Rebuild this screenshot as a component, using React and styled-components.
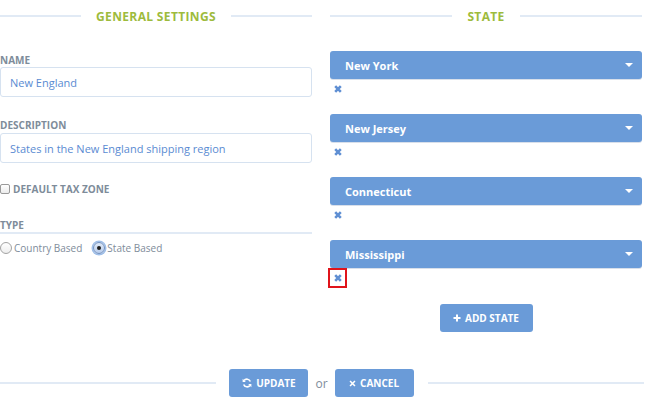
import React from "react";
import styled, { createGlobalStyle } from "styled-components";

const Global = createGlobalStyle`
  html, body { margin: 0; padding: 0; background: #fff; }
  body { font-family: "Open Sans", "Liberation Sans", sans-serif; }
  * { box-sizing: border-box; }
`;

const BLUE = "#6a9bd8";
const GREEN = "#9dbb3c";
const LABEL = "#7e8c9a";
const LINE = "#e1eaf5";

const Page = styled.div`
  width: 644px;
  display: flex;
  flex-direction: column;
`;

const Columns = styled.div`
  display: grid;
  grid-template-columns: 312px 312px;
  column-gap: 18px;
`;

const Column = styled.div`
  display: flex;
  flex-direction: column;
`;

const SectionHeader = styled.div`
  height: 32px;
  display: flex;
  align-items: center;
  gap: 15px;
  color: ${GREEN};
  font-size: 12px;
  font-weight: 700;
  letter-spacing: 0.35px;
  text-transform: uppercase;
`;

const Rule = styled.span`
  flex: 1;
  height: 2px;
  background: ${LINE};
`;

const Label = styled.div`
  font-size: 10px;
  font-weight: 700;
  line-height: 14px;
  color: ${LABEL};
  text-transform: uppercase;
  margin-top: ${(p) => p.$top}px;
  ${(p) => p.$underline && `border-bottom: 2px solid ${LINE};`}
`;

const Input = styled.input`
  display: block;
  width: 100%;
  height: 30px;
  margin-top: ${(p) => p.$top || 0}px;
  border: 1px solid #d6e2f0;
  border-radius: 3px;
  padding: 0 9px;
  font-family: inherit;
  font-size: 11px;
  color: #5a8bd2;
  outline: none;
  background: #fff;
`;

const CheckRow = styled.label`
  display: flex;
  align-items: center;
  gap: 3px;
  height: 14px;
  margin-top: 19px;
  font-size: 10px;
  font-weight: 700;
  color: ${LABEL};
`;

const CheckBox = styled.span`
  width: 10px;
  height: 10px;
  border: 1px solid #9a9a9a;
  border-radius: 2px;
  background: linear-gradient(#fff, #ececec);
`;

const RadioRow = styled.div`
  display: flex;
  align-items: center;
  gap: 11px;
  height: 14px;
  margin-top: 7px;
`;

const RadioOption = styled.label`
  display: flex;
  align-items: center;
  gap: 2px;
  font-size: 10px;
  color: ${LABEL};
`;

const RadioCircle = styled.span`
  width: 12px;
  height: 12px;
  border-radius: 50%;
  border: 1px solid ${(p) => (p.$on ? "#6f8fbf" : "#a3a3a3")};
  background: ${(p) => (p.$on ? "linear-gradient(#dfe9f7, #b9cdec)" : "linear-gradient(#fff, #eee)")};
  box-shadow: ${(p) => (p.$on ? "0 0 0 1.5px #9fbfe9" : "none")};
  display: flex;
  align-items: center;
  justify-content: center;
  &::after {
    content: "";
    width: 4px;
    height: 4px;
    border-radius: 50%;
    background: ${(p) => (p.$on ? "#1d1d1d" : "transparent")};
  }
`;

const StateList = styled.div`
  display: flex;
  flex-direction: column;
  gap: 17px;
  margin-top: 19px;
`;

const StateGroup = styled.div`
  display: flex;
  flex-direction: column;
  align-items: flex-start;
`;

const SelectBar = styled.div`
  width: 100%;
  height: 28px;
  border-radius: 3px;
  background: ${BLUE};
  box-shadow: 0 1px 0 rgba(40, 80, 140, 0.18);
  display: flex;
  align-items: center;
  justify-content: space-between;
  padding: 0 9px 0 15px;
  color: #fff;
  font-size: 11px;
  font-weight: 700;
`;

const Caret = styled.span`
  width: 0;
  height: 0;
  border-left: 4px solid transparent;
  border-right: 4px solid transparent;
  border-top: 4px solid #fff;
`;

const RemoveBtn = styled.button`
  width: 15px;
  height: 16px;
  margin-top: 2px;
  padding: 0;
  border: none;
  background: transparent;
  display: flex;
  align-items: center;
  justify-content: center;
  color: #5f8fd3;
  outline: ${(p) => (p.$marked ? "2px solid #e0141b" : "none")};
`;

const AddWrap = styled.div`
  display: flex;
  justify-content: center;
  margin-top: 18px;
`;

const Button = styled.button`
  height: 28px;
  width: ${(p) => p.$w}px;
  border: none;
  border-radius: 3px;
  background: ${BLUE};
  color: #fff;
  font-family: inherit;
  font-size: 10px;
  font-weight: 700;
  text-transform: uppercase;
  display: flex;
  align-items: center;
  justify-content: center;
  gap: 4px;
  padding: 0;
`;

const Footer = styled.div`
  display: flex;
  align-items: center;
  gap: 14px;
  margin-top: 37px;
`;

const FooterButtons = styled.div`
  display: flex;
  align-items: center;
  gap: 7px;
  margin-left: -1px;
`;

const Or = styled.span`
  font-size: 12px;
  color: ${LABEL};
`;

const XIcon = ({ size = 8, w = 2.6 }) => (
  <svg width={size} height={size} viewBox="0 0 8 8">
    <path d="M1.2 1.2L6.8 6.8M6.8 1.2L1.2 6.8" stroke="currentColor" strokeWidth={w} />
  </svg>
);

const PlusIcon = () => (
  <svg width="8" height="8" viewBox="0 0 8 8">
    <path d="M4 0.5V7.5M0.5 4H7.5" stroke="#fff" strokeWidth="2" />
  </svg>
);

const RefreshIcon = () => (
  <svg width="10" height="10" viewBox="0 0 10 10" fill="none">
    <path d="M8.3 3.6A3.6 3.6 0 0 0 2 2.6" stroke="#fff" strokeWidth="1.6" />
    <path d="M1.7 6.4A3.6 3.6 0 0 0 8 7.4" stroke="#fff" strokeWidth="1.6" />
    <path d="M0.6 0.8V4H3.8Z" fill="#fff" />
    <path d="M9.4 9.2V6H6.2Z" fill="#fff" />
  </svg>
);

const states = ["New York", "New Jersey", "Connecticut", "Mississippi"];

export default function App() {
  return (
    <Page>
      <Global />
      <Columns>
        <Column>
          <SectionHeader>
            <Rule />
            General Settings
            <Rule />
          </SectionHeader>
          <Label $top={21}>Name</Label>
          <Input defaultValue="New England" />
          <Label $top={21}>Description</Label>
          <Input $top={1} defaultValue="States in the New England shipping region" />
          <CheckRow>
            <CheckBox />
            DEFAULT TAX ZONE
          </CheckRow>
          <Label $top={22} $underline>Type</Label>
          <RadioRow>
            <RadioOption>
              <RadioCircle />
              Country Based
            </RadioOption>
            <RadioOption>
              <RadioCircle $on />
              State Based
            </RadioOption>
          </RadioRow>
        </Column>
        <Column>
          <SectionHeader>
            <Rule />
            State
            <Rule />
          </SectionHeader>
          <StateList>
            {states.map((s, i) => (
              <StateGroup key={s}>
                <SelectBar>
                  {s}
                  <Caret />
                </SelectBar>
                <RemoveBtn $marked={i === states.length - 1}>
                  <XIcon />
                </RemoveBtn>
              </StateGroup>
            ))}
          </StateList>
          <AddWrap>
            <Button $w={93}>
              <PlusIcon />
              Add State
            </Button>
          </AddWrap>
        </Column>
      </Columns>
      <Footer>
        <Rule />
        <FooterButtons>
          <Button $w={79}>
            <RefreshIcon />
            Update
          </Button>
          <Or>or</Or>
          <Button $w={79}>
            <XIcon size={7} w={1.8} />
            Cancel
          </Button>
        </FooterButtons>
        <Rule />
      </Footer>
    </Page>
  );
}
